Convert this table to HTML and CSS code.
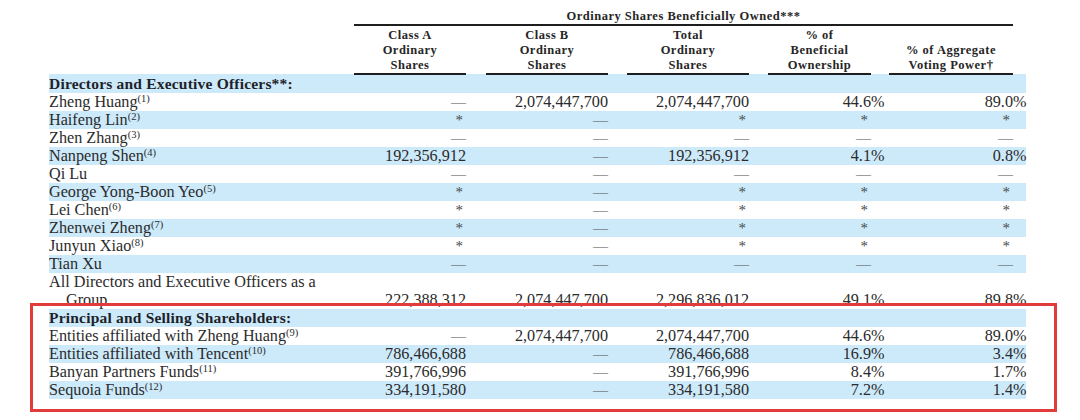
FILE: index.html
```html
<!DOCTYPE html>
<html>
<head>
<meta charset="utf-8">
<link rel="stylesheet" href="styles.css">
</head>
<body>
<div class="page">
  <table class="own">
    <colgroup>
      <col class="c-label"><col class="c-a"><col class="c-g1"><col class="c-b"><col class="c-g2"><col class="c-t"><col class="c-g3"><col class="c-ben"><col class="c-pct"><col class="c-g4"><col class="c-vot"><col class="c-pct">
    </colgroup>
    <thead>
      <tr class="h1">
        <th></th>
        <th colspan="10" class="span-head">Ordinary Shares Beneficially Owned***</th>
        <th></th>
      </tr>
      <tr class="h2">
        <th></th>
        <th class="ch">Class A<br>Ordinary<br>Shares</th>
        <th></th>
        <th class="ch">Class B<br>Ordinary<br>Shares</th>
        <th></th>
        <th class="ch">Total<br>Ordinary<br>Shares</th>
        <th></th>
        <th class="ch">% of<br>Beneficial<br>Ownership</th>
        <th></th>
        <th></th>
        <th class="ch">% of Aggregate<br>Voting Power†</th>
        <th></th>
      </tr>
    </thead>
    <tbody>
      <tr class="blue"><td class="lbl bold">Directors and Executive Officers**:</td><td></td><td></td><td></td><td></td><td></td><td></td><td></td><td></td><td></td><td></td><td></td></tr>
      <tr><td class="lbl">Zheng Huang<sup>(1)</sup></td><td class="n d">—</td><td></td><td class="n">2,074,447,700</td><td></td><td class="n">2,074,447,700</td><td></td><td class="n">44.6</td><td class="p">%</td><td></td><td class="n">89.0</td><td class="p">%</td></tr>
      <tr class="blue"><td class="lbl">Haifeng Lin<sup>(2)</sup></td><td class="n s">*</td><td></td><td class="n d">—</td><td></td><td class="n s">*</td><td></td><td class="n s">*</td><td></td><td></td><td class="n s">*</td><td></td></tr>
      <tr><td class="lbl">Zhen Zhang<sup>(3)</sup></td><td class="n d">—</td><td></td><td class="n d">—</td><td></td><td class="n d">—</td><td></td><td class="n d">—</td><td></td><td></td><td class="n d">—</td><td></td></tr>
      <tr class="blue"><td class="lbl">Nanpeng Shen<sup>(4)</sup></td><td class="n">192,356,912</td><td></td><td class="n d">—</td><td></td><td class="n">192,356,912</td><td></td><td class="n">4.1</td><td class="p">%</td><td></td><td class="n">0.8</td><td class="p">%</td></tr>
      <tr><td class="lbl">Qi Lu</td><td class="n d">—</td><td></td><td class="n d">—</td><td></td><td class="n d">—</td><td></td><td class="n d">—</td><td></td><td></td><td class="n d">—</td><td></td></tr>
      <tr class="blue"><td class="lbl">George Yong-Boon Yeo<sup>(5)</sup></td><td class="n s">*</td><td></td><td class="n d">—</td><td></td><td class="n s">*</td><td></td><td class="n s">*</td><td></td><td></td><td class="n s">*</td><td></td></tr>
      <tr><td class="lbl">Lei Chen<sup>(6)</sup></td><td class="n s">*</td><td></td><td class="n d">—</td><td></td><td class="n s">*</td><td></td><td class="n s">*</td><td></td><td></td><td class="n s">*</td><td></td></tr>
      <tr class="blue"><td class="lbl">Zhenwei Zheng<sup>(7)</sup></td><td class="n s">*</td><td></td><td class="n d">—</td><td></td><td class="n s">*</td><td></td><td class="n s">*</td><td></td><td></td><td class="n s">*</td><td></td></tr>
      <tr><td class="lbl">Junyun Xiao<sup>(8)</sup></td><td class="n s">*</td><td></td><td class="n d">—</td><td></td><td class="n s">*</td><td></td><td class="n s">*</td><td></td><td></td><td class="n s">*</td><td></td></tr>
      <tr class="blue"><td class="lbl">Tian Xu</td><td class="n d">—</td><td></td><td class="n d">—</td><td></td><td class="n d">—</td><td></td><td class="n d">—</td><td></td><td></td><td class="n d">—</td><td></td></tr>
      <tr class="two"><td class="lbl hang">All Directors and Executive Officers as a<br>Group</td><td class="n">222,388,312</td><td></td><td class="n">2,074,447,700</td><td></td><td class="n">2,296,836,012</td><td></td><td class="n">49.1</td><td class="p">%</td><td></td><td class="n">89.8</td><td class="p">%</td></tr>
      <tr class="blue"><td class="lbl bold">Principal and Selling Shareholders:</td><td></td><td></td><td></td><td></td><td></td><td></td><td></td><td></td><td></td><td></td><td></td></tr>
      <tr><td class="lbl">Entities affiliated with Zheng Huang<sup>(9)</sup></td><td class="n d">—</td><td></td><td class="n">2,074,447,700</td><td></td><td class="n">2,074,447,700</td><td></td><td class="n">44.6</td><td class="p">%</td><td></td><td class="n">89.0</td><td class="p">%</td></tr>
      <tr class="blue"><td class="lbl">Entities affiliated with Tencent<sup>(10)</sup></td><td class="n">786,466,688</td><td></td><td class="n d">—</td><td></td><td class="n">786,466,688</td><td></td><td class="n">16.9</td><td class="p">%</td><td></td><td class="n">3.4</td><td class="p">%</td></tr>
      <tr><td class="lbl">Banyan Partners Funds<sup>(11)</sup></td><td class="n">391,766,996</td><td></td><td class="n d">—</td><td></td><td class="n">391,766,996</td><td></td><td class="n">8.4</td><td class="p">%</td><td></td><td class="n">1.7</td><td class="p">%</td></tr>
      <tr class="blue"><td class="lbl">Sequoia Funds<sup>(12)</sup></td><td class="n">334,191,580</td><td></td><td class="n d">—</td><td></td><td class="n">334,191,580</td><td></td><td class="n">7.2</td><td class="p">%</td><td></td><td class="n">1.4</td><td class="p">%</td></tr>
    </tbody>
  </table>
  <div class="pageno">103</div>
  <div class="highlight"></div>
</div>
</body>
</html>
```
FILE: styles.css
```css
html, body {
  margin: 0;
  padding: 0;
  background: #ffffff;
}
.page {
  position: relative;
  width: 1080px;
  height: 420px;
  overflow: hidden;
  padding: 8px 0 0 49px;
  box-sizing: border-box;
  font-family: "Liberation Serif", "Times New Roman", serif;
  color: #2b2b2b;
}
.own {
  border-collapse: collapse;
  table-layout: fixed;
  width: 977px;
}
.c-label { width: 305px; }
.c-a { width: 112px; }
.c-g1 { width: 20px; }
.c-b { width: 122px; }
.c-g2 { width: 19px; }
.c-t { width: 122px; }
.c-g3 { width: 19px; }
.c-ben { width: 103px; }
.c-pct { width: 13px; }
.c-g4 { width: 5px; }
.c-vot { width: 124px; }
.own th, .own td {
  padding: 0;
}
.own th {
  font-weight: bold;
  font-size: 12.5px;
  letter-spacing: 0.5px;
  line-height: 15px;
  text-align: center;
  vertical-align: bottom;
  color: #262626;
}
.h1 th {
  height: 16px;
}
.span-head {
  border-bottom: 2px solid #1e1e1e;
  padding-bottom: 1px;
}
.h2 th {
  height: 47px;
}
.h2 th.ch {
  border-bottom: 2px solid #1e1e1e;
}
.own td {
  font-size: 16.2px;
  line-height: 18px;
  height: 18px;
  white-space: nowrap;
  vertical-align: bottom;
}
.blue td {
  background: #cdeafb;
}
.lbl {
  text-align: left;
}
.bold {
  font-weight: bold;
  font-size: 15.5px !important;
  letter-spacing: 0.2px;
  color: #1f1f2a;
}
.hang {
  white-space: normal;
  padding-left: 17px !important;
  text-indent: -17px;
}
.two td {
  height: 36px;
}
.n {
  text-align: right;
}
.n.s {
  padding-right: 3px;
  color: #4a4a4a;
  font-size: 15px;
}
.n.d {
  color: #505050;
  font-size: 15px;
}
.p {
  text-align: left;
}
sup {
  font-size: 10.5px;
  line-height: 0;
  vertical-align: 5px;
}
.pageno {
  text-align: center;
  font-size: 15px;
  width: 977px;
  margin-top: 18px;
}
.highlight {
  position: absolute;
  left: 30px;
  top: 303px;
  width: 1027px;
  height: 109px;
  border: 3px solid #e23b3b;
  box-sizing: border-box;
}
```
